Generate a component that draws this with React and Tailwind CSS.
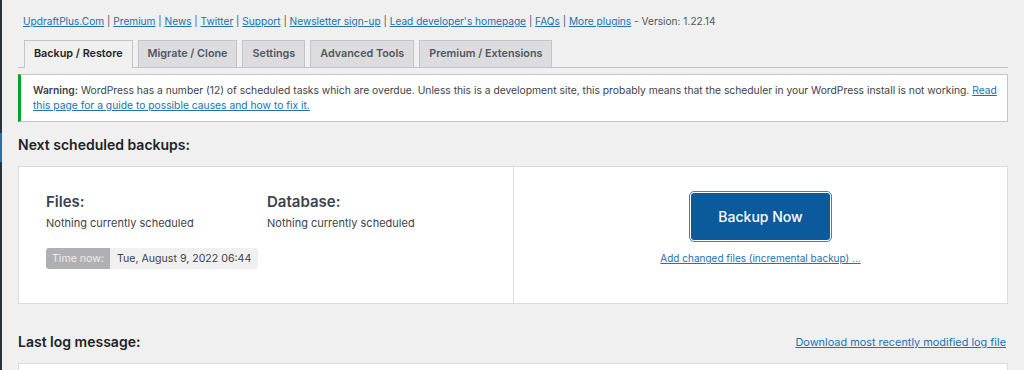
import React from "react";

const links = [
  "UpdraftPlus.Com",
  "Premium",
  "News",
  "Twitter",
  "Support",
  "Newsletter sign-up",
  "Lead developer's homepage",
  "FAQs",
  "More plugins",
];

const tabs = [
  { label: "Backup / Restore", active: true },
  { label: "Migrate / Clone" },
  { label: "Settings" },
  { label: "Advanced Tools" },
  { label: "Premium / Extensions" },
];

export default function App() {
  return (
    <div className="flex min-h-[370px] overflow-hidden bg-[#f0f0f1] font-['Inter',sans-serif] text-[#3c434a]">
      <div className="w-[2px] shrink-0 bg-[#2c3338] pt-[133px]">
        <div className="h-[29px] bg-[#2271b1]" />
      </div>
      <div className="flex-1 px-[16px]">
        {/* Top links */}
        <div className="pl-[5px] pt-[14px] text-[10.15px] leading-[14px] text-[#50575e]">
          {links.map((l, i) => (
            <React.Fragment key={l}>
              <a className="text-[#2271b1] underline underline-offset-[1px]">{l}</a>
              {i < links.length - 1 ? " | " : ""}
            </React.Fragment>
          ))}
          {" - Version: 1.22.14"}
        </div>

        {/* Tabs */}
        <div className="mt-[12px] flex gap-[5px] border-b border-[#c3c4c7] pl-[6px]">
          {tabs.map((t) => (
            <div
              key={t.label}
              className={
                t.active
                  ? "-mb-px flex h-[28px] items-center border border-b-0 border-[#c3c4c7] bg-[#f0f0f1] px-[9px] text-[10.8px] font-semibold text-[#1d2327]"
                  : "flex h-[27px] items-center border border-b-0 border-[#c3c4c7] bg-[#dcdcde] px-[9px] text-[10.8px] font-semibold text-[#50575e]"
              }
            >
              {t.label}
            </div>
          ))}
        </div>

        {/* Notice */}
        <div className="mt-[6px] border border-l-[3px] border-[#c3c4c7] border-l-[#00a32a] bg-white py-[8px] pl-[12px] pr-[6px] text-[10.3px] leading-[15px] text-[#3c434a]">
          <div>
            <span className="font-semibold">Warning:</span> WordPress has a number (12) of scheduled tasks
            which are overdue. Unless this is a development site, this probably means that the scheduler in
            your WordPress install is not working. <a className="text-[#2271b1] underline">Read</a>
          </div>
          <div>
            <a className="text-[#2271b1] underline">this page for a guide to possible causes and how to fix it.</a>
          </div>
        </div>

        {/* Next scheduled backups */}
        <h2 className="mt-[13px] text-[14px] font-semibold leading-[20px] text-[#1d2327]">
          Next scheduled backups:
        </h2>

        <div className="mt-[11px] grid h-[138px] grid-cols-2 border border-[#dcdcde] bg-white">
          <div className="pl-[27px] pt-[25px]">
            <div className="flex">
              <div className="w-[221px]">
                <div className="text-[15px] font-semibold leading-[20px] text-[#3c434a]">Files:</div>
                <div className="mt-[3px] text-[11px] leading-[16px]">Nothing currently scheduled</div>
              </div>
              <div>
                <div className="text-[15px] font-semibold leading-[20px] text-[#3c434a]">Database:</div>
                <div className="mt-[3px] text-[11px] leading-[16px]">Nothing currently scheduled</div>
              </div>
            </div>
            <div className="mt-[17px] inline-flex h-[21px] overflow-hidden rounded-[3px] text-[10.6px]">
              <span className="flex items-center bg-[#b0b0b2] px-[6px] text-[#ececec]">Time now:</span>
              <span className="flex items-center bg-[#f0f0f1] px-[7px] text-[#3c434a]">
                Tue, August 9, 2022 06:44
              </span>
            </div>
          </div>
          <div className="flex flex-col items-center border-l border-[#dcdcde] pt-[26px]">
            <button className="flex h-[47px] w-[139px] items-center justify-center rounded-[3px] bg-[#0a5a9c] text-[14px] font-medium text-white outline outline-1 outline-offset-1 outline-[#3582c4]">
              Backup Now
            </button>
            <a className="mt-[11px] text-[10px] leading-[14px] text-[#2271b1] underline">
              Add changed files (incremental backup) ...
            </a>
          </div>
        </div>

        {/* Last log message */}
        <div className="mt-[28px] flex items-center justify-between">
          <h2 className="text-[14px] font-semibold leading-[20px] text-[#1d2327]">Last log message:</h2>
          <a className="mr-[2px] text-[10.9px] leading-[14px] text-[#2271b1] underline">
            Download most recently modified log file
          </a>
        </div>
        <div className="mt-[11px] h-[40px] border border-[#dcdcde] bg-white" />
      </div>
    </div>
  );
}
